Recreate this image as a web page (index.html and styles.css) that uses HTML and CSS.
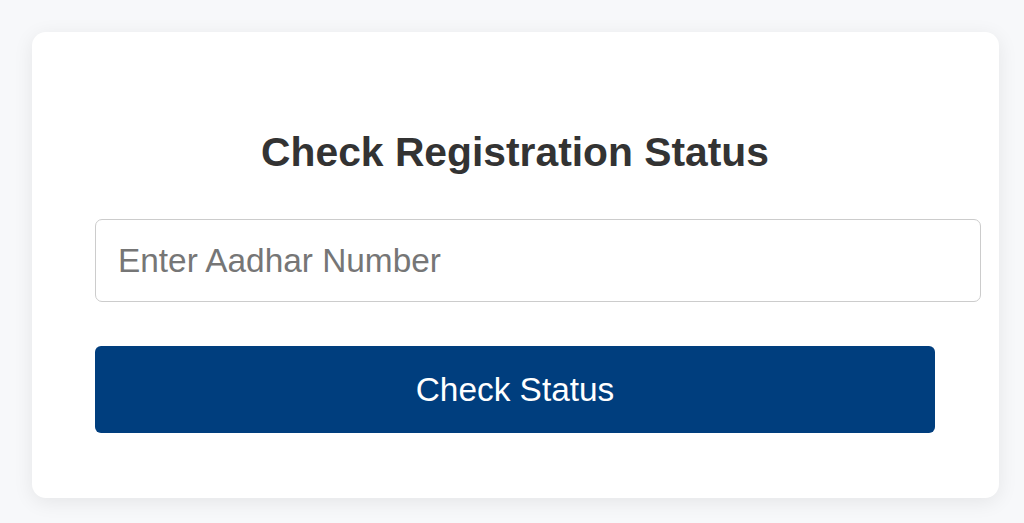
FILE: index.html
```html
<!DOCTYPE html>
<html lang="en">
<head>
    <meta charset="UTF-8">
    <meta name="viewport" content="width=device-width, initial-scale=1.0">
    <title>Check Registration Status</title>
    <link rel="stylesheet" href="styles.css">
</head>
<body>
    <div class="container">
        <h2 class="title">Check Registration Status</h2>
        <input type="text" id="aadharInput" class="aadhar-input" placeholder="Enter Aadhar Number" maxlength="12">
        <button class="check-btn">Check Status</button>
    </div>
</body>
</html>
```

FILE: styles.css
```css
body {
    font-family: "Liberation Sans", Arial, sans-serif;
    margin: 0;
    padding: 32px;
    background-color: #f7f8fa;
}
.container {
    width: 967px;
    box-sizing: border-box;
    padding: 63px 64px 65px 63px;
    background-color: #fff;
    border-radius: 14px;
    box-shadow: 0 4px 20px rgba(0,0,0,0.08);
}
.title {
    margin: 37px 0 46px;
    font-size: 40.8px;
    line-height: 41px;
    font-weight: bold;
    color: #333;
    text-align: center;
}
.aadhar-input {
    display: block;
    width: 100%;
    margin: 0 0 44px;
    padding: 23px 22px;
    font-family: inherit;
    font-size: 33.4px;
    line-height: 35px;
    color: #333;
    border: 1.5px solid #ccc;
    border-radius: 7px;
    outline: none;
}
.aadhar-input::placeholder {
    color: #767676;
}
.check-btn {
    display: block;
    width: 100%;
    padding: 26px 20px;
    font-family: inherit;
    font-size: 33.4px;
    line-height: 35px;
    color: #fff;
    background-color: #003e7e;
    border: none;
    border-radius: 6px;
    cursor: pointer;
}
.check-btn:hover {
    background-color: #00346b;
}
```
